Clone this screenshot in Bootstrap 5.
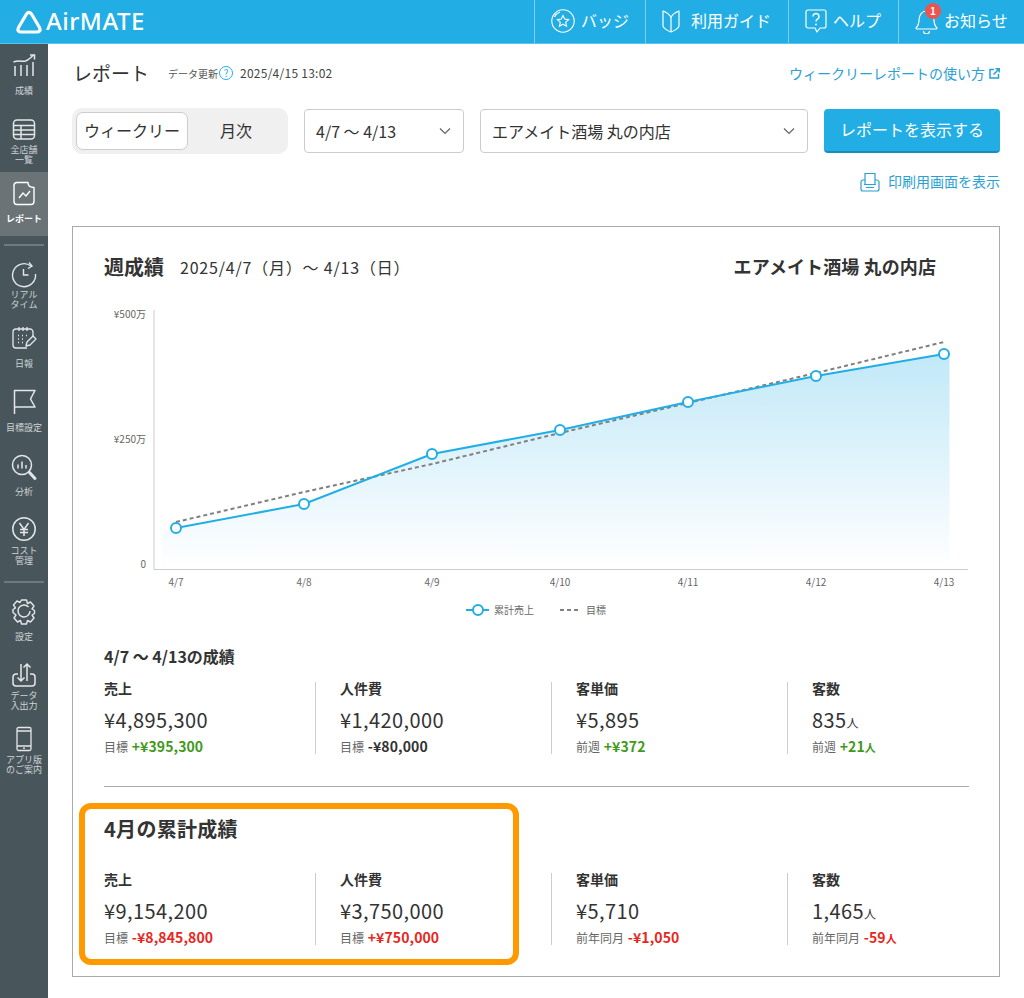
<!DOCTYPE html>
<html lang="ja">
<head>
<meta charset="UTF-8">
<title>AirMATE レポート</title>
<link href="https://cdn.jsdelivr.net/npm/bootstrap@5.3.2/dist/css/bootstrap.min.css" rel="stylesheet">
<style>
  body { font-family: "Noto Sans CJK JP", "Noto Sans", sans-serif; color: #333; background: #fff; font-size: 14px; }
  .top-bar { height: 44px; background: #22aee5; color: #fff; border-bottom: 1px solid #5cc3ec; }
  .logo-wrap { padding-left: 15px; gap: 3px; }
  .logo-text { font-family: "Noto Sans", sans-serif; font-weight: 500; font-size: 24px; line-height: 1; letter-spacing: .5px; padding-bottom: 1px; }
  .top-item { height: 43px; border-left: 1px solid #7fcfee; padding: 0 0 2px 16px; font-size: 16px; gap: 6px; }
  .top-item svg { display: block; }
  .w-badge { width: 111px; } .w-guide { width: 143px; gap: 11px; } .w-help { width: 110px; } .w-news { width: 126px; }
  .top-item > span { padding-bottom: 1px; }
  .bell-wrap { width: 23px; height: 26px; }
  .bell-count { top: -5px; left: 10px; width: 16px; height: 16px; border-radius: 50%; background: #ee5350; font-size: 10px; line-height: 16px; text-align: center; font-weight: 700; }
  .side-bar { width: 48px; background: #48555b; min-height: 954px; flex-shrink: 0; }
  .side-item { height: 64px; padding-top: 8px; color: #cfd4d6; }
  .side-item svg { display: block; margin: 0 auto; overflow: visible; }
  .side-item.on { background: #6a7477; color: #fff; }
  .side-icon { height: 26px; }
  .side-label { height: 24px; font-size: 9px; line-height: 10px; text-align: center; padding-top: 2px; }
  .side-rule { height: 2px; margin: 8px 4px 7px; background: #6f7a7f; }
  .main-area { padding: 0 24px; width: 976px; }
  .head-row { height: 64px; padding-top: 14px; }
  .page-title { font-size: 19px; line-height: 30px; margin: 0 19px 0 1px; font-weight: 400; }
  .upd-label { font-size: 10px; color: #555; }
  .upd-date { font-size: 12px; color: #444; margin-left: 7px; letter-spacing: .25px; }
  .help-ring { width: 14px; height: 14px; border: 1px solid #22aee5; border-radius: 50%; color: #22aee5; font-size: 10px; line-height: 12px; text-align: center; margin-left: 1px; }
  .blue-link { color: #2aa0d4; text-decoration: none; font-size: 14px; }
  .seg-box { width: 216px; height: 46px; background: #f0f0f0; border-radius: 10px; padding: 4px; }
  .seg-on { width: 112px; height: 38px; background: #fff; border: 1px solid #ccc; border-radius: 7px; font-size: 16px; padding-bottom: 2px; }
  .seg-off { width: 96px; height: 38px; font-size: 16px; padding-bottom: 2px; }
  .pick-box.form-select { height: 44px; border-color: #ccc; border-radius: 4px; color: #333; font-size: 16px; padding: 0 30px 1px 11px; background-size: 12px 12px; background-position: right 12px center;
    background-image: url("data:image/svg+xml,%3csvg xmlns='http://www.w3.org/2000/svg' viewBox='0 0 12 12'%3e%3cpath fill='none' stroke='%23666' stroke-width='1.2' d='M1 3.5l5 5 5-5'/%3e%3c/svg%3e"); }
  .pick-week { width: 160px; } .pick-shop { width: 328px; }
  .show-btn.btn { width: 176px; height: 44px; background: #22aee5; border: 0; border-bottom: 2px solid #1a8cba; border-radius: 4px; color: #fff; font-size: 16px; padding: 0 0 2px; }
  .print-row { height: 72px; padding-top: 18px; gap: 8px; }
  .print-row a { margin-top: -1px; }
  .report-box { height: 751px; border: 1px solid #aaa; padding: 0 30px 0 31px; }
  .week-head { height: 73px; padding: 6px 33px 0 0; }
  .week-title { font-size: 20px; font-weight: 700; line-height: 36px; margin: 0 16px 0 0; }
  .week-range { font-size: 16px; letter-spacing: .8px; }
  .week-shop { font-size: 18px; font-weight: 700; letter-spacing: .1px; }
  .chart-svg { display: block; margin-bottom: 24px; }
  .chart-svg text { font-family: "Noto Sans CJK JP", sans-serif; font-size: 10px; fill: #666; }
  .sum-title { font-size: 16px; font-weight: 700; line-height: 26px; margin: -1px 0 13px; color: #333; }
  .stat-cell { width: 236px; height: 72px; padding-left: 24px; border-left: 1px solid #ccc; flex-shrink: 0; }
  .stat-cell:first-child { width: 211px; padding-left: 0; border-left: 0; }
  .stat-cell:last-child { width: 182px; }
  .stat-name { font-size: 14px; font-weight: 700; line-height: 14px; margin-top: -1px; }
  .stat-val { font-size: 20px; line-height: 28px; margin-top: 11px; letter-spacing: .4px; }
  .stat-val small { font-size: 12px; line-height: 1; letter-spacing: 0; }
  .stat-sub { font-size: 12px; line-height: 18px; color: #666; margin-top: 3px; }
  .stat-sub b { font-size: 14px; font-weight: 700; color: #333; letter-spacing: .1px; margin-left: 1px; }
  .stat-sub b.up { color: #3f9a1c; } .stat-sub b.down { color: #e8261c; }
  .stat-sub b small { font-size: 11px; line-height: 1; }
  .split-line { margin: 32px 0 0; border: 0; border-top: 1px solid #aaa; opacity: 1; }
  .month-part { padding-top: 25px; }
  .month-title { font-size: 20px; font-weight: 700; line-height: 34px; margin: 0 0 27px; letter-spacing: .3px; }
  .orange-frame { top: 16px; left: -25px; width: 440px; height: 162px; border: 6px solid #ff9900; border-radius: 12px; pointer-events: none; }
</style>
</head>
<body>
<header class="top-bar d-flex align-items-center">
  <div class="logo-wrap d-flex align-items-center">
    <svg width="28" height="26" viewBox="0 0 28 26"><path d="M11.500 5 Q14 1.800 16.500 5 L24.500 18.500 Q26.500 23 21.500 23 H6.500 Q1.500 23 3.500 18.500 Z" fill="none" stroke="#fff" stroke-width="3.200" stroke-linejoin="round"/></svg>
    <span class="logo-text">AirMATE</span>
  </div>
  <nav class="ms-auto d-flex">
    <div class="top-item w-badge d-flex align-items-center">
      <svg width="24" height="24" viewBox="0 0 24 24" fill="none" stroke="#fff" stroke-width="1.100"><circle cx="12" cy="12" r="11.200"/><path d="M3.500 8A9.500 9.500 0 0 1 9 3"/><path d="M12 6.500l1.700 3.600 3.900.5-2.900 2.700.8 3.900-3.500-2-3.500 2 .8-3.900-2.900-2.700 3.900-.5z"/></svg>
      <span>バッジ</span>
    </div>
    <div class="top-item w-guide d-flex align-items-center">
      <svg width="18" height="24" viewBox="0 0 18 24" fill="none" stroke="#fff" stroke-width="1.200"><path d="M1 2c3 1 6 3 8 6 2-3 5-5 8-6v15c0 2-5 5-8 6-3-1-8-4-8-6z" stroke-linejoin="round"/><path d="M9 8v15"/></svg>
      <span>利用ガイド</span>
    </div>
    <div class="top-item w-help d-flex align-items-center">
      <svg width="22" height="24" viewBox="0 0 22 24" fill="none" stroke="#fff" stroke-width="1.200"><path d="M3 1h16a2 2 0 0 1 2 2v14a2 2 0 0 1-2 2h-4l-3 4-2-4H3a2 2 0 0 1-2-2V3a2 2 0 0 1 2-2z" stroke-linejoin="round"/><path d="M8 7.500a3 3 0 1 1 4.500 2.600c-1 .6-1.500 1.200-1.500 2.400" stroke-width="1.500"/><circle cx="11" cy="15.500" r=".9" fill="#fff" stroke="none"/></svg>
      <span>ヘルプ</span>
    </div>
    <div class="top-item w-news d-flex align-items-center">
      <div class="bell-wrap position-relative">
        <svg width="23" height="26" viewBox="0 0 23 26" fill="none" stroke="#fff" stroke-width="1.200"><path d="M1 20c2-2 3-4 3-8 0-5 3-9 7.500-9S19 7 19 12c0 4 1 6 3 8 0 1-1 1-1 1H2s-1 0-1-1z" stroke-linejoin="round"/><path d="M8.500 23a3 3 0 0 0 6 0"/></svg>
        <span class="bell-count position-absolute">1</span>
      </div>
      <span>お知らせ</span>
    </div>
  </nav>
</header>

<div class="d-flex">
  <aside class="side-bar">
    <div class="side-item">
      <div class="side-icon"><svg width="24" height="26" viewBox="0 0 24 26" fill="none" stroke="#e4e7e8" stroke-width="1.500"><path d="M1.500 10c5-2 8 0 12-1 3-1 5-3 8-6"/><path d="M18 3h4.500v4.500"/><path d="M3 14v10M9 13v11M15 13v11M21 10v14"/></svg></div>
      <div class="side-label d-flex align-items-center justify-content-center">成績</div>
    </div>
    <div class="side-item">
      <div class="side-icon"><svg width="24" height="26" viewBox="0 0 24 26" fill="none" stroke="#e4e7e8" stroke-width="1.500"><rect x="1.500" y="4" width="21" height="19" rx="3.500"/><path d="M1.500 9.500h21M1.500 14h21M1.500 18.500h21M9 9.500v13.500"/></svg></div>
      <div class="side-label d-flex align-items-center justify-content-center">全店舗<br>一覧</div>
    </div>
    <div class="side-item on">
      <div class="side-icon"><svg width="24" height="26" viewBox="0 0 24 26" fill="none" stroke="#fff" stroke-width="1.400"><path d="M5 2.500h11c0 3 2 5 6 5v14a3 3 0 0 1-3 3H5a3 3 0 0 1-3-3v-16a3 3 0 0 1 3-3z" stroke-linejoin="round"/><path d="M7 18l4-5 3 3 4-5"/></svg></div>
      <div class="side-label d-flex align-items-center justify-content-center fw-bold">レポート</div>
    </div>
    <div class="side-rule"></div>
    <div class="side-item">
      <div class="side-icon"><svg width="24" height="26" viewBox="0 0 24 26" fill="none" stroke="#e4e7e8" stroke-width="1.400"><path d="M19 5A11.500 11.500 0 1 0 23.500 13"/><path d="M17 1.500l3 3.500-4 2.500"/><path d="M11.500 8v6h5"/></svg></div>
      <div class="side-label d-flex align-items-center justify-content-center">リアル<br>タイム</div>
    </div>
    <div class="side-item">
      <div class="side-icon"><svg width="24" height="26" viewBox="0 0 24 26" fill="none" stroke="#e4e7e8" stroke-width="1.300"><path d="M21 11V7a3 3 0 0 0-3-3H4a3 3 0 0 0-3 3v13a3 3 0 0 0 3 3h11"/><path d="M7 2v4M11 2v4M15 2v4"/><path d="M6 10.500h1M10 10.500h1M14 10.500h1M6 14h1M10 14h1M6 17.500h1M10 17.500h1" stroke-width="1.500"/><path d="M14 21l1-4 6-6 3 3-6 6z" stroke-linejoin="round"/></svg></div>
      <div class="side-label d-flex align-items-center justify-content-center">日報</div>
    </div>
    <div class="side-item">
      <div class="side-icon"><svg width="24" height="26" viewBox="0 0 24 26" fill="none" stroke="#e4e7e8" stroke-width="1.500"><path d="M2.500 25V1.500H23L18.500 10 23 18H2.500" stroke-linejoin="round"/></svg></div>
      <div class="side-label d-flex align-items-center justify-content-center">目標設定</div>
    </div>
    <div class="side-item">
      <div class="side-icon"><svg width="24" height="26" viewBox="0 0 24 26" fill="none" stroke="#e4e7e8" stroke-width="1.500"><circle cx="10" cy="12" r="9.500"/><path d="M6 11.500v4M10 8.500v7M14 12v3.500"/><path d="M17.500 19.500l5.500 6" stroke-width="3" stroke-linecap="round"/></svg></div>
      <div class="side-label d-flex align-items-center justify-content-center">分析</div>
    </div>
    <div class="side-item">
      <div class="side-icon"><svg width="24" height="26" viewBox="0 0 24 26" fill="none" stroke="#e4e7e8" stroke-width="1.500"><circle cx="12" cy="12" r="11.200"/><path d="M7.500 6l4.500 6.500L16.500 6M12 12.500V19M8 12.500h8M8 15.500h8"/></svg></div>
      <div class="side-label d-flex align-items-center justify-content-center">コスト<br>管理</div>
    </div>
    <div class="side-rule"></div>
    <div class="side-item">
      <div class="side-icon"><svg width="24" height="26" viewBox="0 0 24 26" fill="none" stroke="#e4e7e8" stroke-width="1.400"><path d="M9.500 2h5l1 3.500 3-1.500 3.500 4-2 3 2.500 1.500v3l-2.500 1.500 2 3-3.500 4-3-1.500-1 3.500h-5l-1-3.500-3 1.500-3.500-4 2-3L1 14.500v-3L3.500 10l-2-3 3.500-4 3 1.500z" stroke-linejoin="round"/><path d="M16.500 9A6 6 0 1 0 18 13"/></svg></div>
      <div class="side-label d-flex align-items-center justify-content-center">設定</div>
    </div>
    <div class="side-item">
      <div class="side-icon"><svg width="24" height="26" viewBox="0 0 24 26" fill="none" stroke="#e4e7e8" stroke-width="1.500"><path d="M6 12H4a3 3 0 0 0-3 3v6a3 3 0 0 0 3 3h16a3 3 0 0 0 3-3v-6a3 3 0 0 0-3-3h-2"/><path d="M9 2v17M5.500 15.500L9 19l3.500-3.500M15 19V2M11.500 5.500L15 2l3.500 3.500"/></svg></div>
      <div class="side-label d-flex align-items-center justify-content-center">データ<br>入出力</div>
    </div>
    <div class="side-item">
      <div class="side-icon"><svg width="24" height="26" viewBox="0 0 24 26" fill="none" stroke="#e4e7e8" stroke-width="1.300"><rect x="5" y="1.500" width="14" height="23" rx="1.500"/><path d="M5 5h14M5 20h14"/><circle cx="12" cy="22.200" r=".9" fill="#e4e7e8" stroke="none"/></svg></div>
      <div class="side-label d-flex align-items-center justify-content-center">アプリ版<br>のご案内</div>
    </div>
  </aside>

  <main class="main-area">
    <div class="head-row d-flex align-items-start">
      <h1 class="page-title">レポート</h1>
      <div class="d-flex align-items-center" style="height:30px">
        <span class="upd-label">データ更新</span><span class="help-ring">?</span>
        <span class="upd-date">2025/4/15 13:02</span>
      </div>
      <a class="blue-link ms-auto d-flex align-items-center gap-1" style="height:30px" href="#">ウィークリーレポートの使い方
        <svg width="11" height="11" viewBox="0 0 11 11" fill="none" stroke="#2aa0d4" stroke-width="1.500"><path d="M5 1.500H1v8.500h8.500V6"/><path d="M4.500 6.500L10 1M6.500 .800h3.700v3.700"/></svg>
      </a>
    </div>

    <div class="d-flex align-items-center">
      <div class="seg-box d-flex me-3">
        <div class="seg-on d-flex align-items-center justify-content-center">ウィークリー</div>
        <div class="seg-off d-flex align-items-center justify-content-center">月次</div>
      </div>
      <select class="form-select pick-box pick-week me-3"><option>4/7 〜 4/13</option></select>
      <select class="form-select pick-box pick-shop me-3"><option>エアメイト酒場 丸の内店</option></select>
      <button class="btn show-btn" type="button">レポートを表示する</button>
    </div>

    <div class="print-row d-flex justify-content-end align-items-start">
      <svg width="20" height="20" viewBox="0 0 20 20" fill="none" stroke="#2aa0d4" stroke-width="1.200"><path d="M5 12V1.500h10V12"/><path d="M5 8H3a2 2 0 0 0-2 2v7a2 2 0 0 0 2 2h14a2 2 0 0 0 2-2v-7a2 2 0 0 0-2-2h-2M4 12.500h12M6 15.500h8"/></svg>
      <a class="blue-link" href="#">印刷用画面を表示</a>
    </div>

    <section class="report-box">
      <div class="week-head d-flex align-items-center">
        <h2 class="week-title">週成績</h2>
        <span class="week-range">2025/4/7（月）〜 4/13（日）</span>
        <span class="week-shop ms-auto">エアメイト酒場 丸の内店</span>
      </div>

      <svg class="chart-svg" width="866" height="320" viewBox="104 300 866 320">
        <defs><linearGradient id="areaFade" x1="0" y1="0" x2="0" y2="1"><stop offset="0" stop-color="#22aee5" stop-opacity=".28"/><stop offset="1" stop-color="#22aee5" stop-opacity="0"/></linearGradient></defs>
        <path d="M154 310V569.500H968" fill="none" stroke="#ccc" stroke-width="1"/>
        <path d="M162 533L176 528 304 504 432 454 560 430 688 402 816 376 944 354 949.500 353V569H162Z" fill="url(#areaFade)"/>
        <path d="M176 522L304 492 432 464 560 433 688 403 816 373 944 342" fill="none" stroke="#808080" stroke-width="2" stroke-dasharray="4 3"/>
        <path d="M176 528L304 504 432 454 560 430 688 402 816 376 944 354" fill="none" stroke="#22aee5" stroke-width="2"/>
        <g fill="#fff" stroke="#22aee5" stroke-width="2">
          <circle cx="176" cy="528" r="5"/><circle cx="304" cy="504" r="5"/><circle cx="432" cy="454" r="5"/><circle cx="560" cy="430" r="5"/><circle cx="688" cy="402" r="5"/><circle cx="816" cy="376" r="5"/><circle cx="944" cy="354" r="5"/>
        </g>
        <text x="146" y="318" text-anchor="end">¥500万</text>
        <text x="146" y="443" text-anchor="end">¥250万</text>
        <text x="146" y="568" text-anchor="end">0</text>
        <text x="176" y="586" text-anchor="middle">4/7</text>
        <text x="304" y="586" text-anchor="middle">4/8</text>
        <text x="432" y="586" text-anchor="middle">4/9</text>
        <text x="560" y="586" text-anchor="middle">4/10</text>
        <text x="688" y="586" text-anchor="middle">4/11</text>
        <text x="816" y="586" text-anchor="middle">4/12</text>
        <text x="944" y="586" text-anchor="middle">4/13</text>
        <path d="M466 610H489" stroke="#22aee5" stroke-width="2"/>
        <circle cx="478" cy="610" r="5" fill="#fff" stroke="#22aee5" stroke-width="2"/>
        <text x="494" y="614">累計売上</text>
        <path d="M560 610H581" stroke="#808080" stroke-width="2" stroke-dasharray="4 3"/>
        <text x="586" y="614">目標</text>
      </svg>

      <h3 class="sum-title">4/7 〜 4/13の成績</h3>
      <div class="d-flex">
        <div class="stat-cell">
          <div class="stat-name">売上</div>
          <div class="stat-val">¥4,895,300</div>
          <div class="stat-sub">目標 <b class="up">+¥395,300</b></div>
        </div>
        <div class="stat-cell">
          <div class="stat-name">人件費</div>
          <div class="stat-val">¥1,420,000</div>
          <div class="stat-sub">目標 <b>-¥80,000</b></div>
        </div>
        <div class="stat-cell">
          <div class="stat-name">客単価</div>
          <div class="stat-val">¥5,895</div>
          <div class="stat-sub">前週 <b class="up">+¥372</b></div>
        </div>
        <div class="stat-cell">
          <div class="stat-name">客数</div>
          <div class="stat-val">835<small>人</small></div>
          <div class="stat-sub">前週 <b class="up">+21<small>人</small></b></div>
        </div>
      </div>

      <hr class="split-line">

      <div class="month-part position-relative">
        <div class="orange-frame position-absolute"></div>
        <h3 class="month-title">4月の累計成績</h3>
        <div class="d-flex">
          <div class="stat-cell">
            <div class="stat-name">売上</div>
            <div class="stat-val">¥9,154,200</div>
            <div class="stat-sub">目標 <b class="down">-¥8,845,800</b></div>
          </div>
          <div class="stat-cell">
            <div class="stat-name">人件費</div>
            <div class="stat-val">¥3,750,000</div>
            <div class="stat-sub">目標 <b class="down">+¥750,000</b></div>
          </div>
          <div class="stat-cell">
            <div class="stat-name">客単価</div>
            <div class="stat-val">¥5,710</div>
            <div class="stat-sub">前年同月 <b class="down">-¥1,050</b></div>
          </div>
          <div class="stat-cell">
            <div class="stat-name">客数</div>
            <div class="stat-val">1,465<small>人</small></div>
            <div class="stat-sub">前年同月 <b class="down">-59<small>人</small></b></div>
          </div>
        </div>
      </div>
    </section>
  </main>
</div>
<script src="https://cdn.jsdelivr.net/npm/bootstrap@5.3.2/dist/js/bootstrap.bundle.min.js"></script>
</body>
</html>
